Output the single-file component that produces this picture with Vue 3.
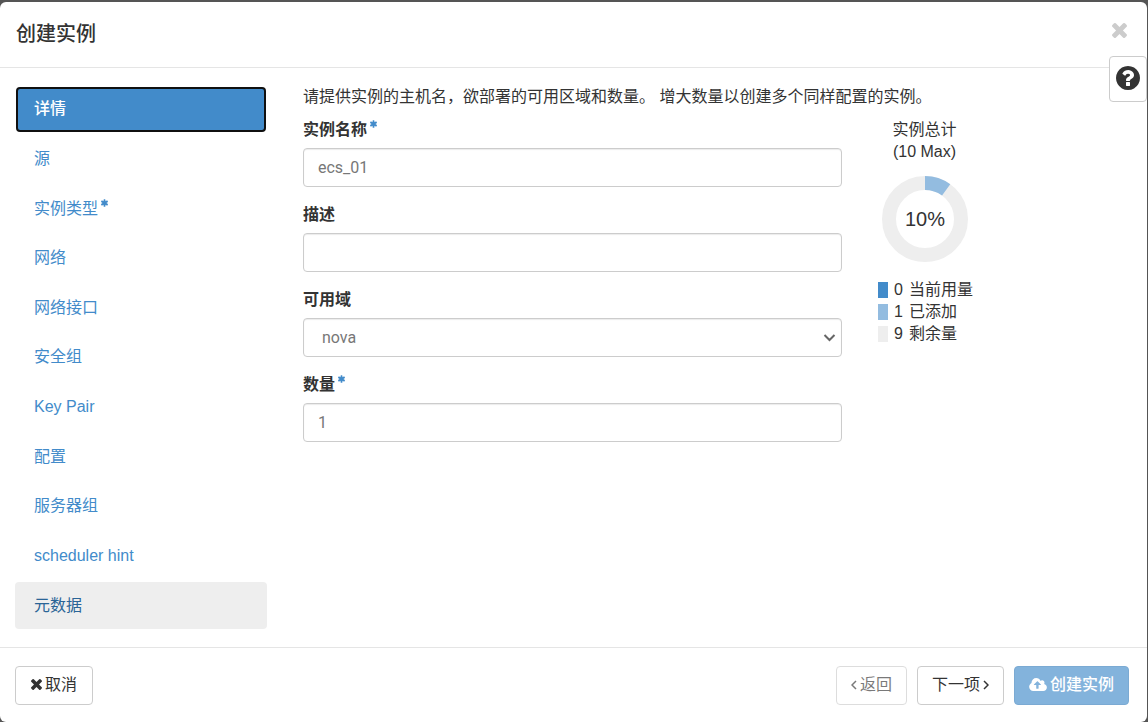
<script setup>
import { ref } from 'vue'

const steps = [
  { label: '详情', state: 'active' },
  { label: '源' },
  { label: '实例类型', required: true },
  { label: '网络' },
  { label: '网络接口' },
  { label: '安全组' },
  { label: 'Key Pair' },
  { label: '配置' },
  { label: '服务器组' },
  { label: 'scheduler hint' },
  { label: '元数据', state: 'hovered' },
]

const legend = [
  { value: 0, label: '当前用量', kind: 'used' },
  { value: 1, label: '已添加', kind: 'added' },
  { value: 9, label: '剩余量', kind: 'left' },
]

const name = ref('ecs_01')
const description = ref('')
const zone = ref('nova')
const count = ref('1')

const asterisk = 'M1546 1050q46 26 59.5 77.5t-12.5 97.5l-64 110q-26 46-77.5 59.5t-97.5-12.5l-266-153v307q0 52-38 90t-90 38h-128q-52 0-90-38t-38-90v-307l-266 153q-46 26-97.5 12.5t-77.5-59.5l-64-110q-26-46-12.5-97.5t59.5-77.5l266-154-266-154q-46-26-59.5-77.5t12.5-97.5l64-110q26-46 77.5-59.5t97.5 12.5l266 153v-307q0-52 38-90t90-38h128q52 0 90 38t38 90v307l266-153q46-26 97.5-12.5t77.5 59.5l64 110q26 46 12.5 97.5t-59.5 77.5l-266 154z'
const times = 'M1490 1322q0 40-28 68l-136 136q-28 28-68 28t-68-28l-294-294-294 294q-28 28-68 28t-68-28l-136-136q-28-28-28-68t28-68l294-294-294-294q-28-28-28-68t28-68l136-136q28-28 68-28t68 28l294 294 294-294q28-28 68-28t68 28l136 136q28 28 28 68t-28 68l-294 294 294 294q28 28 28 68z'
</script>

<template>
  <div class="backdrop">
    <section class="modal" role="dialog" aria-labelledby="dialog-title">
      <header class="head">
        <h1 id="dialog-title">创建实例</h1>
        <button class="close" type="button" aria-label="关闭">
          <svg viewBox="302 366 1188 1188"><path :d="times" /></svg>
        </button>
      </header>
      <button class="help" type="button" aria-label="帮助">
        <svg viewBox="128 128 1536 1536">
          <path d="M1024 1376v-192q0-14-9-23t-23-9h-192q-14 0-23 9t-9 23v192q0 14 9 23t23 9h192q14 0 23-9t9-23zm256-672q0-88-55.5-163t-138.5-116-170-41q-243 0-371 213-15 24 8 42l132 100q7 6 19 6 16 0 25-12 53-68 86-92 34-24 86-24 48 0 85.5 26t37.5 59q0 38-20 61t-68 45q-63 28-115.5 86.5t-52.5 125.5v36q0 14 9 23t23 9h192q14 0 23-9t9-23q0-19 21.5-49.5t54.5-49.5q32-18 49-28.5t46-35 44.5-48 28-60.5 12.5-81zm384 192q0 209-103 385.5t-279.5 279.5-385.5 103-385.5-103-279.5-279.5-103-385.5 103-385.5 279.5-279.5 385.5-103 385.5 103 279.5 279.5 103 385.5z" />
        </svg>
      </button>

      <div class="body">
        <nav class="steps">
          <a v-for="s in steps" :key="s.label" href="#" :class="s.state">
            <span>{{ s.label }}</span>
            <svg v-if="s.required" class="req" viewBox="180 128 1432 1536"><path :d="asterisk" /></svg>
          </a>
        </nav>

        <main class="content">
          <p class="intro">请提供实例的主机名，欲部署的可用区域和数量。 增大数量以创建多个同样配置的实例。</p>
          <div class="columns">
            <form class="form" @submit.prevent>
              <div class="field">
                <label for="name">实例名称<svg class="req" viewBox="180 128 1432 1536"><path :d="asterisk" /></svg></label>
                <input id="name" v-model="name" type="text">
              </div>
              <div class="field">
                <label for="description">描述</label>
                <input id="description" v-model="description" type="text">
              </div>
              <div class="field">
                <label for="zone">可用域</label>
                <div class="select">
                  <select id="zone" v-model="zone"><option>nova</option></select>
                  <svg viewBox="0 0 12 8"><path d="M1 1l5 5 5-5" /></svg>
                </div>
              </div>
              <div class="field">
                <label for="count">数量<svg class="req" viewBox="180 128 1432 1536"><path :d="asterisk" /></svg></label>
                <input id="count" v-model="count" type="text" inputmode="numeric">
              </div>
            </form>

            <aside class="quota">
              <div class="quota-title">实例总计<br>(10 Max)</div>
              <svg class="donut" viewBox="0 0 86 86" role="img" aria-label="10%">
                <circle class="track" cx="43" cy="43" r="36" />
                <circle class="slice" cx="43" cy="43" r="36" pathLength="100" stroke-dasharray="10 90" transform="rotate(-90 43 43)" />
                <text x="43" y="50" text-anchor="middle">10%</text>
              </svg>
              <ul class="legend">
                <li v-for="l in legend" :key="l.kind">
                  <i :class="l.kind"></i><span>{{ l.value }}</span><span>{{ l.label }}</span>
                </li>
              </ul>
            </aside>
          </div>
        </main>
      </div>

      <footer class="foot">
        <button class="btn cancel" type="button">
          <svg class="x" viewBox="302 366 1188 1188"><path :d="times" /></svg>取消
        </button>
        <button class="btn" type="button" disabled>
          <svg class="angle" viewBox="0 0 6 10"><path d="M5 1L1 5l4 4" /></svg>返回
        </button>
        <button class="btn" type="button">
          下一项<svg class="angle" viewBox="0 0 6 10"><path d="M1 1l4 4-4 4" /></svg>
        </button>
        <button class="btn primary" type="button" disabled>
          <svg class="cloud" viewBox="-64 128 1920 1408">
            <path d="M1216 864q0-14-9-23l-352-352q-9-9-23-9t-23 9l-351 351q-10 12-10 24 0 14 9 23t23 9h224v352q0 13 9.5 22.5t22.5 9.5h192q13 0 22.5-9.5t9.5-22.5v-352h224q13 0 22.5-9.5t9.5-22.5zm640 288q0 159-112.5 271.5t-271.5 112.5h-1088q-185 0-316.5-131.5t-131.5-316.5q0-130 70-240t188-165q-2-30-2-43 0-212 150-362t362-150q156 0 285.5 87t188.5 231q71-62 166-62 106 0 181 75t75 181q0 76-41 138 130 31 213.5 135.5t83.5 238.5z" />
          </svg>创建实例
        </button>
      </footer>
    </section>
  </div>
</template>

<style>
body {
  background: #555;
}
</style>

<style scoped>
* {
  box-sizing: border-box;
}

.backdrop {
  display: flex;
  min-height: 100vh;
  padding: 2px 1px 0 0;
  background: #555;
  color: #333;
  font: 16px/22px "Liberation Sans", "Noto Sans CJK SC", sans-serif;
}

.modal {
  position: relative;
  display: flex;
  flex: 1;
  flex-direction: column;
  min-width: 0;
  border-radius: 6px;
  background: #fff;
}

button,
input,
select {
  font: inherit;
  color: inherit;
}

svg {
  flex: none;
  fill: currentColor;
}

.head {
  display: flex;
  align-items: flex-start;
  justify-content: space-between;
  padding: 17px 20px 18px 16px;
  border-bottom: 1px solid #e5e5e5;
}

h1 {
  margin: 0;
  font-size: 20px;
  font-weight: 500;
  line-height: 30px;
}

.close {
  display: flex;
  padding: 4px 0 0;
  border: 0;
  background: none;
  color: #ccc;
}

.close svg {
  width: 15px;
  height: 15px;
}

.help {
  position: absolute;
  top: 54px;
  right: 0;
  display: flex;
  padding: 9px 6px 11px;
  border: 1px solid #ccc;
  border-radius: 4px;
  background: #fff;
}

.help svg {
  width: 24px;
  height: 24px;
}

.body {
  display: grid;
  flex: 1;
  grid-template-columns: minmax(0, 252fr) minmax(0, 826fr);
  gap: 36px;
  padding: 18px 18px 18px 15px;
}

.steps {
  display: grid;
  grid-auto-rows: 1fr;
  gap: 3px;
}

.steps a {
  display: flex;
  align-items: center;
  padding: 0 19px;
  border-radius: 4px;
  color: #428bca;
  text-decoration: none;
}

.steps .active {
  margin: 1px;
  padding: 0 16px;
  border: 2px solid #101010;
  background: #428bca;
  color: #fff;
  font-weight: 500;
}

.steps .hovered {
  background: #eee;
  color: #2a6496;
}

.req {
  width: 7px;
  height: 8px;
  margin: 0 0 12px 3px;
  color: #428bca;
}

.intro {
  margin: 0 0 11px;
}

.columns {
  display: grid;
  grid-template-columns: minmax(0, 539fr) minmax(0, 251fr);
  gap: 36px;
}

.form {
  display: grid;
  align-content: start;
  gap: 17px;
}

.field {
  display: grid;
  gap: 7px;
}

label {
  display: flex;
  align-items: center;
  height: 22px;
  font-weight: 700;
}

input,
select {
  width: 100%;
  height: 39px;
  padding: 0 14px;
  border: 1px solid #ccc;
  border-radius: 4px;
  background: #fff;
  box-shadow: inset 0 1px 1px rgba(0, 0, 0, 0.08);
  color: #777;
  font-family: Roboto, "Noto Sans CJK SC", sans-serif;
}

.select {
  position: relative;
}

select {
  display: block;
  padding: 0 18px;
  appearance: none;
}

.select svg {
  position: absolute;
  top: 16px;
  right: 6px;
  width: 13px;
  height: 8px;
  fill: none;
  stroke: #666;
  stroke-width: 2;
  pointer-events: none;
}

.quota {
  display: flex;
  flex-direction: column;
  align-items: center;
  width: 93px;
}

.quota-title {
  text-align: center;
}

.donut {
  width: 86px;
  height: 86px;
  margin: 13px 0 17px;
}

.donut circle {
  fill: none;
  stroke-width: 14;
}

.track {
  stroke: #eee;
}

.slice {
  stroke: #93bce0;
}

.donut text {
  fill: #333;
  font-size: 20px;
}

.legend {
  align-self: flex-start;
  margin: 0;
  padding: 0;
  list-style: none;
  white-space: nowrap;
}

.legend li {
  display: flex;
  align-items: center;
  gap: 6px;
}

.legend i {
  width: 10px;
  height: 16px;
}

.used {
  background: #428bca;
}

.added {
  background: #93bce0;
}

.left {
  background: #eee;
}

.foot {
  display: flex;
  gap: 10px;
  padding: 18px 18px 17px 15px;
  border-top: 1px solid #e5e5e5;
}

.btn {
  display: flex;
  align-items: center;
  gap: 3px;
  height: 39px;
  padding: 0 14px 2px;
  border: 1px solid #ccc;
  border-radius: 4px;
  background: #fff;
  white-space: nowrap;
}

.cancel {
  margin-right: auto;
  padding: 0 15px 2px;
}

.btn:disabled {
  opacity: 0.65;
}

.primary {
  border-color: #357ebd;
  background: #428bca;
  color: #fff;
  font-weight: 500;
}

.x {
  width: 11px;
  height: 11px;
}

.angle {
  width: 6px;
  height: 10px;
  fill: none;
  stroke: currentColor;
  stroke-width: 1.5;
}

.cloud {
  width: 18px;
  height: 13px;
}
</style>
